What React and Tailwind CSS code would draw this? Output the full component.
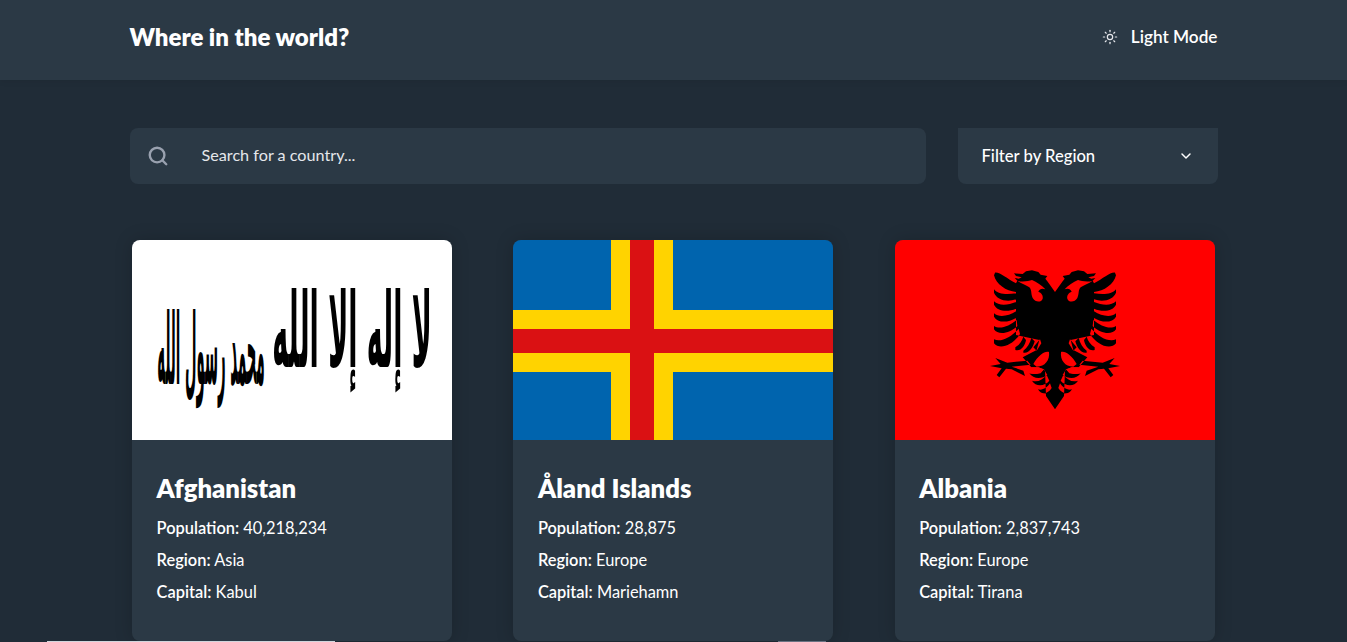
import React from 'react';
import { ChevronDown, Search, Sun } from 'lucide-react';

// real text, squeezed and stretched so it fills the flag like the calligraphy does
const Shahada = ({ x, y, sx, sy, size, children }) => (
  <text
    transform={`translate(${x} ${y}) scale(${sx} ${sy})`}
    fontFamily="'DejaVu Sans', sans-serif"
    fontWeight="700"
    fontSize={size}
    textAnchor="middle"
    fill="#000"
  >
    {children}
  </text>
);

const AfghanFlag = () => (
  <svg viewBox="0 0 320 200" className="block h-[200px] w-[320px] bg-white">
    <Shahada x={220} y={127} sx={0.48} sy={1.85} size={56}>لا إله إلا الله</Shahada>
    <Shahada x={79} y={144} sx={0.35} sy={2.6} size={38}>محمد رسول الله</Shahada>
  </svg>
);

const AlandFlag = () => (
  <svg viewBox="0 0 320 200" className="block h-[200px] w-[320px]">
    <rect width="320" height="200" fill="#0064ae" />
    <rect x="98" width="62" height="200" fill="#ffd300" />
    <rect y="70" width="320" height="62" fill="#ffd300" />
    <rect x="117" width="24" height="200" fill="#da1113" />
    <rect y="89" width="320" height="24" fill="#da1113" />
  </svg>
);

// left half of the eagle, mirrored around x=255 for the right one
const eagleBlack =
  'M255 96 L232 64 L226 56 L232 48 L212 44 L205 36 L186 31 L168 34 L158 42 L132 40 L138 48 L155 52 L146 56 L134 54 L142 62 L138 70 L138 225 L208 240 L200 270 L158 292 L184 322 L205 322 L225 330 L228 408 L255 448 Z ' +
  'M75 38 C90 36 110 56 138 70 L138 96 C108 94 78 72 72 46 Z ' +
  'M72 88 C84 104 112 104 138 100 L138 118 C108 128 80 118 72 98 Z ' +
  'M72 124 C86 138 114 136 138 126 L138 146 C110 158 80 152 72 134 Z ' +
  'M72 160 C88 174 116 168 138 154 L138 174 C112 190 82 188 72 170 Z ' +
  'M72 198 C90 210 118 198 140 180 L142 198 C118 222 84 226 72 208 Z ' +
  'M72 238 C94 248 124 230 146 206 L150 222 C130 254 90 272 72 250 Z ' +
  'M136 262 C148 254 156 244 160 230 L168 240 C166 256 152 276 136 270 Z ' +
  'M160 272 C172 264 180 250 184 234 L194 244 C190 262 176 282 160 278 Z ' +
  'M190 262 L210 238 L214 250 L200 272 Z ' +
  'M178 340 C195 346 212 340 222 328 L232 345 C215 358 190 358 178 340 Z ' +
  'M186 362 C202 368 218 360 230 345 L238 362 C225 378 198 382 186 362 Z ' +
  'M204 388 C218 392 232 382 240 370 L245 384 C235 400 215 408 204 388 Z ' +
  'M60 318 L92 312 L76 294 L112 308 L172 302 L182 314 L125 320 L160 332 L165 348 L125 328 L108 326 L88 352 L80 345 L95 325 Z';

const eagleRed =
  'M142 62 C160 68 176 62 186 60 C200 66 216 76 226 88 C218 84 208 86 205 95 C214 98 220 106 218 116 C214 128 196 128 188 114 C182 100 186 90 178 82 C168 74 154 72 142 62 Z ' +
  'M237 276 C225 272 205 285 190 312 L200 320 C225 320 240 300 237 276 Z ' +
  'M184 322 L205 322 L222 328 L212 340 C200 344 188 342 178 340 Z';

const AlbaniaFlag = () => (
  <svg viewBox="0 0 320 200" className="block h-[200px] w-[320px] bg-[#ff0000]">
    <svg x="75" y="20" width="170" height="160" viewBox="0 0 510 480">
      <path d={eagleBlack} fill="#000" />
      <path d={eagleBlack} fill="#000" transform="matrix(-1 0 0 1 510 0)" />
      <path d={eagleRed} fill="#ff0000" />
      <path d={eagleRed} fill="#ff0000" transform="matrix(-1 0 0 1 510 0)" />
    </svg>
  </svg>
);

const countries = [
  { name: 'Afghanistan', population: '40,218,234', region: 'Asia', capital: 'Kabul', Flag: AfghanFlag },
  { name: 'Åland Islands', population: '28,875', region: 'Europe', capital: 'Mariehamn', Flag: AlandFlag },
  { name: 'Albania', population: '2,837,743', region: 'Europe', capital: 'Tirana', Flag: AlbaniaFlag },
];

const Fact = ({ label, value }) => (
  <p className="text-[16.4px] leading-8">
    <span className="font-semibold">{label}:</span> {value}
  </p>
);

const CountryCard = ({ name, population, region, capital, Flag }) => (
  <article className="h-[401px] w-[320px] overflow-hidden rounded-lg bg-[#2b3945] shadow-[0_0_18px_rgba(0,0,0,0.18)]">
    <Flag />
    <div className="px-[24.6px] pt-[32px]">
      <h2 className="mb-2 text-[25.7px] leading-8 font-extrabold">{name}</h2>
      <Fact label="Population" value={population} />
      <Fact label="Region" value={region} />
      <Fact label="Capital" value={capital} />
    </div>
  </article>
);

export default function App() {
  return (
    <div className="relative h-[642px] overflow-hidden bg-[#202c37] font-['Lato','Noto_Sans',sans-serif] text-white">
      <header className="h-20 bg-[#2b3945] shadow-[0_2px_6px_rgba(0,0,0,0.06)]">
        <div className="mx-auto flex h-full w-[1088px] items-center justify-between pb-1.5">
          <h1 className="text-2xl font-extrabold">Where in the world?</h1>
          <div className="flex items-center gap-[13px]">
            <Sun size={16} strokeWidth={1.8} className="text-gray-200" />
            <span className="text-[17.2px] font-semibold">Light Mode</span>
          </div>
        </div>
      </header>

      <main className="mx-auto w-[1088px] pt-12">
        <div className="flex justify-between">
          <label className="flex h-14 w-[796px] items-center rounded-lg bg-[#2b3945] pl-[17px]">
            <Search size={22} strokeWidth={2.6} className="text-gray-400" />
            <span className="mb-0.5 ml-[33px] text-[16.2px] text-gray-200">Search for a country...</span>
          </label>
          <div className="flex h-14 w-[260px] items-center justify-between rounded-b-lg bg-[#2b3945] pr-6 pl-6">
            <span className="text-[16.6px] font-medium">Filter by Region</span>
            <ChevronDown size={16} strokeWidth={2.2} />
          </div>
        </div>

        <section className="mt-14 ml-[2.5px] grid grid-cols-[repeat(3,320px)] gap-x-[61.3px]">
          {countries.map((country) => (
            <CountryCard key={country.name} {...country} />
          ))}
        </section>
      </main>

      {/* thin strips along the bottom edge of the window */}
      <div className="absolute bottom-0 left-[47px] h-px w-[288px] bg-gray-300" />
      <div className="absolute bottom-0 left-[778px] h-px w-[48px] bg-gray-500" />
    </div>
  );
}
